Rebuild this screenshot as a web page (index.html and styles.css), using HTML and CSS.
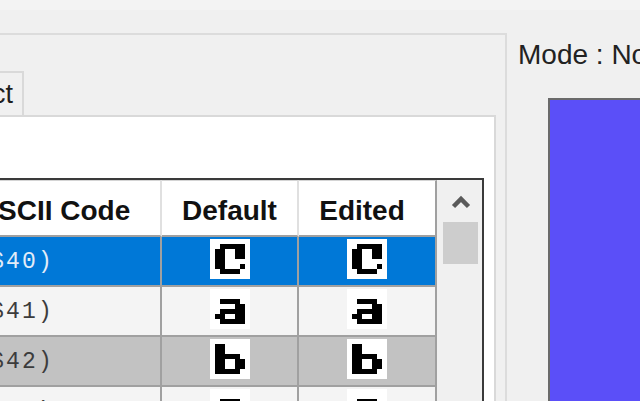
FILE: index.html
```html
<!DOCTYPE html>
<html>
<head>
<meta charset="utf-8">
<title>Font Editor</title>
<link rel="stylesheet" href="styles.css">
</head>
<body>
<div class="window">
  <div class="topband"></div>
  <div class="main">
    <section class="group">
      <div class="tabstrip"><div class="tab">Select</div></div>
      <div class="tabpage">
        <div class="grid">
          <div class="table">
            <div class="row head">
              <div class="cell c1">ASCII Code</div>
              <div class="cell c2">Default</div>
              <div class="cell c3">Edited</div>
            </div>
            <div class="row sel">
              <div class="cell c1 code">@ ($40)</div>
              <div class="cell c2 img">
                <svg class="glyph" viewBox="0 0 8 8" width="40" height="40" shape-rendering="crispEdges"><rect width="8" height="8" fill="#fff"/><g fill="#000"><rect x="2" y="1" width="5" height="1"/><rect x="1" y="2" width="2" height="4"/><rect x="5" y="2" width="2" height="2"/><rect x="6" y="5" width="1" height="1"/><rect x="2" y="6" width="4" height="1"/></g></svg>
              </div>
              <div class="cell c3 img">
                <svg class="glyph" viewBox="0 0 8 8" width="40" height="40" shape-rendering="crispEdges"><rect width="8" height="8" fill="#fff"/><g fill="#000"><rect x="2" y="1" width="5" height="1"/><rect x="1" y="2" width="2" height="4"/><rect x="5" y="2" width="2" height="2"/><rect x="6" y="5" width="1" height="1"/><rect x="2" y="6" width="4" height="1"/></g></svg>
              </div>
            </div>
            <div class="row light">
              <div class="cell c1 code">A ($41)</div>
              <div class="cell c2 img">
                <svg class="glyph" viewBox="0 0 8 8" width="40" height="40" shape-rendering="crispEdges"><rect width="8" height="8" fill="#fff"/><g fill="#000"><rect x="2" y="2" width="4" height="1"/><rect x="5" y="3" width="2" height="1"/><rect x="2" y="4" width="5" height="1"/><rect x="1" y="5" width="2" height="1"/><rect x="5" y="5" width="2" height="1"/><rect x="2" y="6" width="5" height="1"/></g></svg>
              </div>
              <div class="cell c3 img">
                <svg class="glyph" viewBox="0 0 8 8" width="40" height="40" shape-rendering="crispEdges"><rect width="8" height="8" fill="#fff"/><g fill="#000"><rect x="2" y="2" width="4" height="1"/><rect x="5" y="3" width="2" height="1"/><rect x="2" y="4" width="5" height="1"/><rect x="1" y="5" width="2" height="1"/><rect x="5" y="5" width="2" height="1"/><rect x="2" y="6" width="5" height="1"/></g></svg>
              </div>
            </div>
            <div class="row gray">
              <div class="cell c1 code">B ($42)</div>
              <div class="cell c2 img">
                <svg class="glyph" viewBox="0 0 8 8" width="40" height="40" shape-rendering="crispEdges"><rect width="8" height="8" fill="#fff"/><g fill="#000"><rect x="1" y="1" width="2" height="6"/><rect x="3" y="3" width="3" height="1"/><rect x="5" y="4" width="2" height="2"/><rect x="3" y="6" width="3" height="1"/></g></svg>
              </div>
              <div class="cell c3 img">
                <svg class="glyph" viewBox="0 0 8 8" width="40" height="40" shape-rendering="crispEdges"><rect width="8" height="8" fill="#fff"/><g fill="#000"><rect x="1" y="1" width="2" height="6"/><rect x="3" y="3" width="3" height="1"/><rect x="5" y="4" width="2" height="2"/><rect x="3" y="6" width="3" height="1"/></g></svg>
              </div>
            </div>
            <div class="row light">
              <div class="cell c1 code">C ($43)</div>
              <div class="cell c2 img">
                <svg class="glyph" viewBox="0 0 8 8" width="40" height="40" shape-rendering="crispEdges"><rect width="8" height="8" fill="#fff"/><g fill="#000"><rect x="2" y="2" width="4" height="1"/><rect x="1" y="3" width="2" height="3"/><rect x="5" y="3" width="2" height="1"/><rect x="5" y="5" width="2" height="1"/><rect x="2" y="6" width="4" height="1"/></g></svg>
              </div>
              <div class="cell c3 img">
                <svg class="glyph" viewBox="0 0 8 8" width="40" height="40" shape-rendering="crispEdges"><rect width="8" height="8" fill="#fff"/><g fill="#000"><rect x="2" y="2" width="4" height="1"/><rect x="1" y="3" width="2" height="3"/><rect x="5" y="3" width="2" height="1"/><rect x="5" y="5" width="2" height="1"/><rect x="2" y="6" width="4" height="1"/></g></svg>
              </div>
            </div>
          </div>
          <div class="vscroll">
            <div class="sb-up">
              <svg width="20" height="14" viewBox="0 0 20 14"><polyline points="2.5,11.5 10,4 17.5,11.5" fill="none" stroke="#5a5a5a" stroke-width="4.5"/></svg>
            </div>
            <div class="sb-thumb"></div>
          </div>
        </div>
      </div>
    </section>
    <aside class="side">
      <div class="mode">Mode : None</div>
      <div class="canvas"></div>
    </aside>
  </div>
</div>
</body>
</html>
```
FILE: styles.css
```css
html, body {
  margin: 0;
  padding: 0;
  background: #f0f0f0;
}
body {
  width: 640px;
  height: 401px;
  overflow: hidden;
  font-family: "Liberation Sans", Arial, sans-serif;
  color: #1e1e1e;
}
.window {
  width: 640px;
  height: 401px;
  overflow: hidden;
  background: #f0f0f0;
}
.topband {
  height: 33px;
  background: linear-gradient(#f3f3f3 0, #f3f3f3 10px, #f0f0f0 10px);
}
.main {
  display: flex;
  height: 368px;
}
.group {
  flex: none;
  box-sizing: border-box;
  width: 567px;
  margin-left: -60px;
  border-top: 2px solid #dcdcdc;
  border-right: 2px solid #dcdcdc;
  padding: 36px 9px 0 0;
  display: flex;
  flex-direction: column;
}
.tabstrip {
  display: flex;
  justify-content: flex-end;
  width: 84px;
}
.tab {
  flex: none;
  box-sizing: border-box;
  height: 44px;
  line-height: 42px;
  font-size: 27px;
  padding: 0 9px 0 10px;
  border-top: 2px solid #d9d9d9;
  border-right: 2px solid #d9d9d9;
  white-space: nowrap;
}
.tabpage {
  flex: 1;
  background: #fff;
  border-top: 2px solid #d9d9d9;
  border-right: 2px solid #d9d9d9;
  padding: 61px 10px 0 6px;
}
.grid {
  display: flex;
  height: 300px;
  border-top: 2px solid #3a3a3a;
  border-left: 2px solid #3a3a3a;
  border-right: 2px solid #3a3a3a;
}
.table {
  width: 489px;
  flex: none;
}
.row {
  display: flex;
  height: 50px;
}
.row.head {
  height: 57px;
  background: #fff;
}
.cell {
  box-sizing: border-box;
  display: flex;
  align-items: center;
  border-right: 2px solid #a0a0a0;
  border-bottom: 2px solid #a0a0a0;
}
.c1 { width: 214px; }
.c2 { width: 137px; }
.c3 { width: 138px; }
.head .cell {
  justify-content: center;
  font-weight: bold;
  font-size: 28px;
  padding-top: 5px;
  border-right-color: #e0e0e0;
  border-top: 1px solid #d4d4d4;
  border-bottom-color: #a0a0a0;
  white-space: nowrap;
  color: #111;
}
.head .c3 {
  border-right-color: #a0a0a0;
  padding-right: 10px;
}
.code {
  font-family: "Liberation Mono", "Courier New", monospace;
  font-size: 23px;
  letter-spacing: 2.2px;
  text-indent: -6px;
  white-space: pre;
  padding-top: 2px;
  color: #3c3c3c;
}
.img {
  justify-content: center;
  align-items: flex-start;
  padding-top: 2px;
}
.glyph {
  display: block;
}
.row.sel { background: #0078d7; }
.row.sel .code { color: #e2ecf8; }
.row.light { background: #f4f4f4; }
.row.gray { background: #c2c2c2; }
.vscroll {
  width: 45px;
  flex: none;
  background: #f0f0f0;
}
.sb-up {
  height: 42px;
  display: flex;
  justify-content: center;
  padding-left: 3px;
  box-sizing: border-box;
  padding-top: 15px;
}
.sb-up svg { display: block; }
.sb-thumb {
  margin-left: 6px;
  width: 35px;
  height: 42px;
  background: #cdcdcd;
}
.side {
  flex: 1;
  padding-left: 11px;
  overflow: hidden;
}
.mode {
  padding-top: 6px;
  font-size: 28px;
  line-height: 32px;
  white-space: nowrap;
  color: #222;
}
.canvas {
  margin-top: 27px;
  margin-left: 30px;
  width: 200px;
  height: 320px;
  background: #5b4ff8;
  border-top: 2px solid #6a6a6a;
  border-left: 2px solid #6a6a6a;
}
```
